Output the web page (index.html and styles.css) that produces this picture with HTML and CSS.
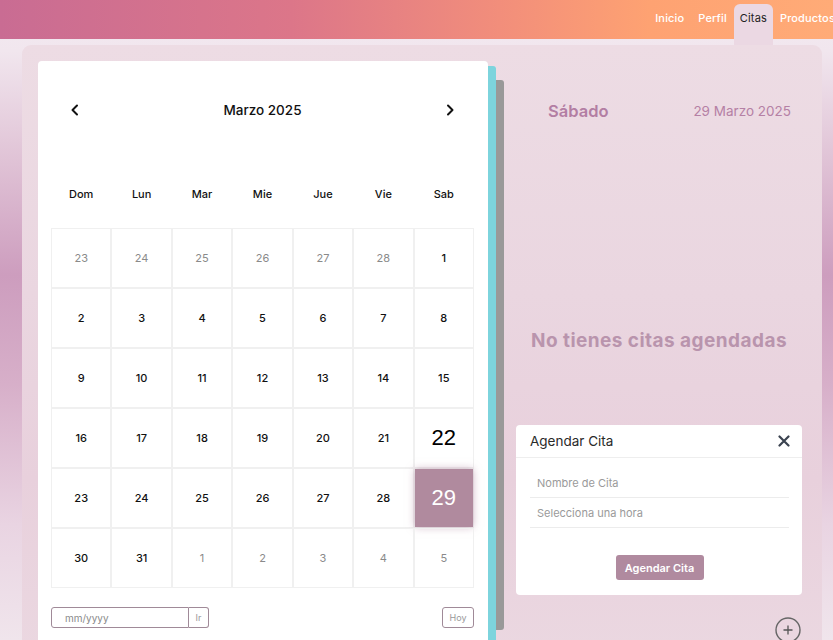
FILE: index.html
```html
<!DOCTYPE html>
<html lang="es">
<head>
<meta charset="utf-8">
<title>Citas</title>
<link rel="stylesheet" href="styles.css">
</head>
<body>
<header class="topbar">
  <nav class="nav">
    <a class="nav-link">Inicio</a>
    <a class="nav-link">Perfil</a>
    <a class="nav-link active">Citas</a>
    <a class="nav-link">Productos</a>
  </nav>
</header>
<main class="shell">
  <section class="calendar">
    <div class="cal-nav">
      <button class="arrow" aria-label="Anterior"><svg width="10" height="12" viewBox="0 0 10 12"><path d="M7 1.5 L2.5 6 L7 10.5" fill="none" stroke="#111" stroke-width="2" stroke-linecap="round" stroke-linejoin="round"/></svg></button>
      <h2 class="month">Marzo 2025</h2>
      <button class="arrow" aria-label="Siguiente"><svg width="10" height="12" viewBox="0 0 10 12"><path d="M3 1.5 L7.5 6 L3 10.5" fill="none" stroke="#111" stroke-width="2" stroke-linecap="round" stroke-linejoin="round"/></svg></button>
    </div>
    <div class="weekdays">
      <span>Dom</span><span>Lun</span><span>Mar</span><span>Mie</span><span>Jue</span><span>Vie</span><span>Sab</span>
    </div>
    <div class="grid">
      <div class="cell muted">23</div><div class="cell muted">24</div><div class="cell muted">25</div><div class="cell muted">26</div><div class="cell muted">27</div><div class="cell muted">28</div><div class="cell">1</div>
      <div class="cell">2</div><div class="cell">3</div><div class="cell">4</div><div class="cell">5</div><div class="cell">6</div><div class="cell">7</div><div class="cell">8</div>
      <div class="cell">9</div><div class="cell">10</div><div class="cell">11</div><div class="cell">12</div><div class="cell">13</div><div class="cell">14</div><div class="cell">15</div>
      <div class="cell">16</div><div class="cell">17</div><div class="cell">18</div><div class="cell">19</div><div class="cell">20</div><div class="cell">21</div><div class="cell today">22</div>
      <div class="cell">23</div><div class="cell">24</div><div class="cell">25</div><div class="cell">26</div><div class="cell">27</div><div class="cell">28</div><div class="cell selected"><span class="sel-box">29</span></div>
      <div class="cell">30</div><div class="cell">31</div><div class="cell muted">1</div><div class="cell muted">2</div><div class="cell muted">3</div><div class="cell muted">4</div><div class="cell muted">5</div>
    </div>
    <div class="cal-footer">
      <div class="goto">
        <input class="goto-input" type="text" placeholder="mm/yyyy">
        <button class="goto-btn">Ir</button>
      </div>
      <button class="today-btn">Hoy</button>
    </div>
  </section>
  <div class="edge edge-teal"></div>
  <div class="edge edge-gray"></div>
  <section class="day-panel">
    <div class="day-head">
      <h3 class="day-name">Sábado</h3>
      <span class="day-date">29 Marzo 2025</span>
    </div>
    <p class="empty">No tienes citas agendadas</p>
    <div class="modal">
      <div class="modal-head">
        <span class="modal-title">Agendar Cita</span>
        <svg class="close" width="12" height="12" viewBox="0 0 12 12"><path d="M1.5 1.5 L10.5 10.5 M10.5 1.5 L1.5 10.5" stroke="#3b4350" stroke-width="2.2" stroke-linecap="round"/></svg>
      </div>
      <div class="modal-body">
        <div class="field">Nombre de Cita</div>
        <div class="field">Selecciona una hora</div>
        <div class="modal-actions"><button class="submit">Agendar Cita</button></div>
      </div>
    </div>
    <div class="add-row">
      <svg width="26" height="26" viewBox="0 0 26 26"><circle cx="13" cy="13" r="12" fill="none" stroke="#666" stroke-width="1.4"/><path d="M13 8.5 V17.5 M8.5 13 H17.5" stroke="#555" stroke-width="1.3"/></svg>
    </div>
  </section>
</main>
</body>
</html>
```
FILE: styles.css
```css
* { box-sizing: border-box; }

html, body {
  margin: 0;
  height: 640px;
  overflow: hidden;
}

body {
  font-family: Inter, "Noto Sans", sans-serif;
  background: linear-gradient(to bottom,
    #f3ebf1 0%, #f1e6ee 8%, #e3c9da 22%, #cd9dbe 43%,
    #d7afc9 60%, #e9d4e2 82%, #f0e5ec 100%);
  color: #111;
}

.topbar {
  height: 45px;
  display: flex;
  justify-content: flex-end;
  overflow: hidden;
  background: linear-gradient(to right, #c96c93 0%, #dc7689 35%, #f28e7b 60%, #fea272 78%, #ffab77 100%);
  background-size: 100% 39px;
  background-repeat: no-repeat;
}

.nav {
  display: flex;
  align-items: flex-start;
  margin-right: -9px;
  padding-top: 4px;
}

.nav-link {
  display: block;
  font-size: 11px;
  font-weight: 500;
  color: #fff;
  padding: 8px 7px 0;
  line-height: 13px;
  letter-spacing: 0.15px;
  white-space: nowrap;
}

.nav-link.active {
  height: 41px;
  color: #222;
  font-weight: 400;
  background: #ebd8e3;
  border-radius: 6px 6px 0 0;
  padding: 8px 6px 0;
}

.shell {
  margin: 0 11px 0 22px;
  height: 620px;
  display: flex;
  align-items: flex-start;
  border-radius: 9px 9px 0 0;
  background: linear-gradient(to bottom, #eddce4 0%, #ead6e0 40%, #e8d0dc 70%, #ebd8e1 100%);
}

/* Calendar card */
.calendar {
  width: 450px;
  height: 604px;
  margin: 16px 0 0 16px;
  background: #fff;
  border-radius: 4px 4px 0 0;
  padding: 0 14px 0 13px;
}

.cal-nav {
  display: flex;
  align-items: center;
  justify-content: space-between;
  padding: 38px 16px 0 16px;
  height: 60px;
}

.arrow {
  width: 16px;
  height: 22px;
  padding: 0;
  border: 0;
  background: none;
  display: flex;
  align-items: center;
  justify-content: center;
}

.month {
  margin: 0;
  font-size: 13.5px;
  font-weight: 500;
  color: #111;
}

.weekdays {
  margin-top: 63px;
  height: 20px;
  display: grid;
  grid-template-columns: repeat(7, 1fr);
  align-items: center;
  text-align: center;
  font-size: 11px;
  font-weight: 500;
  color: #111;
}

.grid {
  margin-top: 24px;
  display: grid;
  grid-template-columns: repeat(7, 1fr);
  grid-auto-rows: 60px;
}

.cell {
  border: 1px solid #f0f0f0;
  display: flex;
  align-items: center;
  justify-content: center;
  font-size: 11px;
  font-weight: 500;
  color: #111;
}

.cell.muted {
  color: #8a8a8a;
  font-weight: 400;
}

.cell.today {
  font-family: "Liberation Sans", Arial, sans-serif;
  font-size: 22px;
  font-weight: 400;
  color: #000;
}

.cell.selected {
  padding: 0;
}

.sel-box {
  width: 58px;
  height: 58px;
  display: flex;
  align-items: center;
  justify-content: center;
  background: #b08a9e;
  color: #fff;
  font-family: "Liberation Sans", Arial, sans-serif;
  font-size: 22px;
  box-shadow: 0 0 8px rgba(170, 120, 150, 0.55);
}

.cal-footer {
  margin-top: 19px;
  display: flex;
  justify-content: space-between;
}

.goto {
  display: flex;
}

.goto-input {
  width: 138px;
  height: 21px;
  border: 1px solid #a08a98;
  border-radius: 3px 0 0 3px;
  padding: 0 0 0 13px;
  font-family: inherit;
  font-size: 10px;
  color: #888;
  outline: none;
}

.goto-input::placeholder { color: #8a8a8a; }

.goto-btn, .today-btn {
  height: 21px;
  border: 1px solid #a08a98;
  background: #fff;
  font-family: inherit;
  font-size: 9px;
  color: #999;
  padding: 0;
}

.goto-btn {
  width: 20px;
  border-left: 0;
  border-radius: 0 3px 3px 0;
}

.today-btn {
  width: 32px;
  border-radius: 3px;
}

/* Book edges */
.edge {
  width: 8px;
  flex: none;
}

.edge-teal {
  margin-top: 21px;
  height: 599px;
  background: #7dd4dd;
  border-radius: 0 3px 0 0;
}

.edge-gray {
  margin-top: 35px;
  height: 550px;
  background: #999;
  border-radius: 0 3px 3px 0;
}

/* Right panel */
.day-panel {
  flex: 1;
  display: flex;
  flex-direction: column;
  padding: 0 20px 0 12px;
}

.day-head {
  display: flex;
  justify-content: space-between;
  align-items: center;
  padding: 56px 11px 0 32px;
  height: 76px;
}

.day-name {
  margin: 0;
  font-size: 16.5px;
  font-weight: 600;
  color: #b37ea3;
  line-height: 20px;
}

.day-date {
  font-size: 13.5px;
  color: #b580a5;
  line-height: 20px;
}

.empty {
  margin: 208px 0 0;
  text-align: center;
  font-size: 19px;
  font-weight: 700;
  letter-spacing: 0.45px;
  line-height: 24px;
  color: #b994ad;
}

.modal {
  margin-top: 72px;
  height: 170px;
  background: #fff;
  border-radius: 4px;
}

.modal-head {
  height: 33px;
  display: flex;
  align-items: center;
  justify-content: space-between;
  padding: 0 12px 0 14px;
  border-bottom: 1px solid #eee;
}

.modal-title {
  font-size: 13.5px;
  color: #2a2a2a;
}

.modal-body {
  padding: 10px 13px 0 14px;
}

.field {
  height: 30px;
  border-bottom: 1px solid #ececec;
  padding-left: 7px;
  display: flex;
  align-items: center;
  font-size: 11px;
  color: #9a9a9a;
}

.modal-actions {
  display: flex;
  justify-content: center;
  margin-top: 27px;
}

.submit {
  width: 88px;
  height: 25px;
  border: 0;
  border-radius: 3px;
  background: #b08a9f;
  color: #fff;
  font-family: inherit;
  font-size: 11px;
  font-weight: 600;
}

.add-row {
  display: flex;
  justify-content: flex-end;
  margin-top: 22px;
  padding-right: 1px;
}
```
